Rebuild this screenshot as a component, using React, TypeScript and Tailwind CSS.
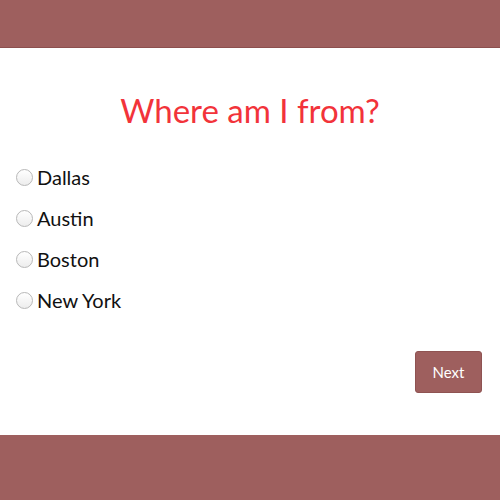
const options = ["Dallas", "Austin", "Boston", "New York"];

export default function App() {
  return (
    <div
      className="flex h-[500px] w-[500px] flex-col bg-white text-[#111]"
      style={{ fontFamily: "Lato, 'Open Sans', sans-serif" }}
    >
      <header className="h-12 shrink-0 border-b border-[#8c4f4e] bg-[#9e5f5e]" />
      <main className="flex-1 px-4">
        <h1 className="mt-[46px] text-center text-[33px] font-normal leading-8 text-[#f2333a]">
          Where am I from?
        </h1>
        <div className="mt-[39px] flex flex-col gap-[18px]">
          {options.map((o) => (
            <label key={o} className="flex h-[23px] items-center gap-[4px] text-[20px]">
              <span className="mt-[2px] h-[17px] w-[17px] rounded-full border border-[#b8b8b8] bg-gradient-to-b from-white to-[#ededed]" />
              {o}
            </label>
          ))}
        </div>
        <div className="mt-[40px] flex justify-end pr-[2px]">
          <button className="h-[42px] w-[67px] rounded-[3px] border border-[#8f5352] bg-[#9e5f5e] text-[15px] text-white">
            Next
          </button>
        </div>
      </main>
      <footer className="h-[65px] shrink-0 bg-[#9e5f5e]" />
    </div>
  );
}
